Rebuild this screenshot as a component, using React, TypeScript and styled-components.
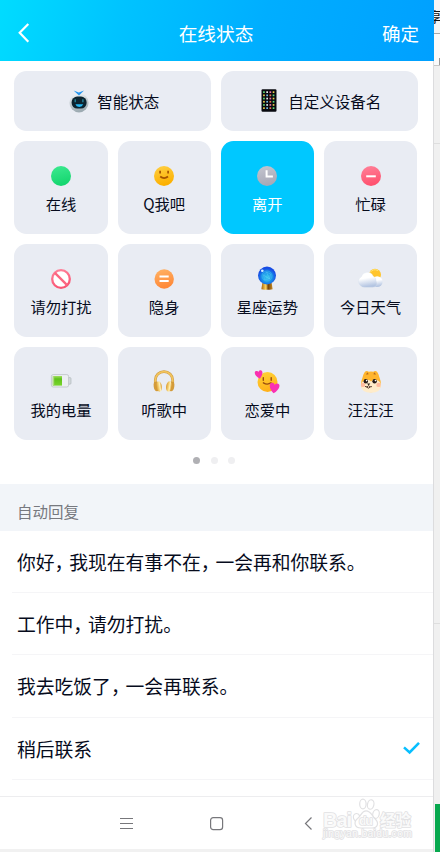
import React from "react";
import styled, { createGlobalStyle } from "styled-components";

const GlobalStyle = createGlobalStyle`
  * { box-sizing: border-box; }
  body {
    margin: 0;
    background: #f0f0f0;
    color: #060b1c;
    font-family: "Noto Sans CJK SC", sans-serif;
  }
  svg { display: block; overflow: visible; }
`;

const Screen = styled.div`
  display: flex;
  width: 440px;
  height: 852px;
  overflow: hidden;
`;

const Phone = styled.main`
  position: relative;
  z-index: 1;
  display: flex;
  flex-direction: column;
  width: 434px;
  height: 852px;
  flex: none;
  background: #fff;
  border-right: 1px solid #dcdcde;
`;

const Header = styled.header`
  display: grid;
  grid-template-columns: 80px 1fr 85px;
  align-items: center;
  height: 61px;
  flex: none;
  margin-right: -1px;
  padding: 5px 15px 0 18px;
  color: #fff;
  background: linear-gradient(105deg, #00dcff 0%, #00c3ff 28%, #00aeff 60%, #00a0ff 100%);
`;

const Title = styled.h1`
  margin: 0;
  font-size: 18.7px;
  line-height: 26px;
  font-weight: 400;
  text-align: center;
  white-space: nowrap;
`;

const Confirm = styled.div`
  font-size: 18.5px;
  line-height: 26px;
  text-align: right;
`;

const StatusPanel = styled.section`
  height: 423px;
  flex: none;
  padding: 10px 15px 0 14.4px;
`;

const WideRow = styled.div`
  display: grid;
  grid-template-columns: 196.5px 197px;
  gap: 10.3px;
  margin-bottom: 10.2px;
`;

const WideTile = styled.div<{ $gap: number }>`
  display: flex;
  align-items: center;
  justify-content: center;
  gap: ${(p) => p.$gap}px;
  height: 60px;
  padding-left: 3px;
  border-radius: 12.5px;
  background: #e9ecf3;
  font-size: 15.5px;
`;

const TileGrid = styled.div`
  display: grid;
  grid-template-columns: repeat(4, 93.2px);
  gap: 9.8px 10px;
`;

const Tile = styled.div<{ $active?: boolean }>`
  display: flex;
  flex-direction: column;
  align-items: center;
  height: 93.2px;
  padding-top: 21.6px;
  border-radius: 12.5px;
  color: ${(p) => (p.$active ? "#fff" : "inherit")};
  background: ${(p) => (p.$active ? "#00c8ff" : "#e9ecf3")};
`;

const TileIcon = styled.div`
  display: grid;
  place-items: center;
  width: 28px;
  height: 26px;
`;

const TileLabel = styled.div`
  margin-top: 2px;
  font-size: 15.3px;
  line-height: 24px;
  white-space: nowrap;
`;

const Dots = styled.div`
  display: flex;
  justify-content: center;
  gap: 10.3px;
  margin-top: 16.5px;
  padding-right: 4px;
`;

const Dot = styled.i<{ $on?: boolean }>`
  width: 7px;
  height: 7px;
  border-radius: 50%;
  background: ${(p) => (p.$on ? "#b0b0b4" : "#efeff1")};
`;

const SectionTitle = styled.h2`
  height: 47px;
  flex: none;
  margin: 0;
  padding: 9px 17px 0;
  font-size: 15.5px;
  line-height: 37px;
  font-weight: 400;
  color: #77797f;
  background: #f2f5f9;
`;

const Replies = styled.div`
  height: 266px;
  flex: none;
  padding-left: 12px;
  border-bottom: 1px solid #ededef;
`;

const Reply = styled.div`
  display: flex;
  align-items: center;
  justify-content: space-between;
  height: 62.2px;
  padding: 0 13px 0 5px;
  border-bottom: 1px solid #f5f5f7;
  font-size: 18.8px;
  white-space: nowrap;
`;

const Comma = styled.span`
  margin-right: 5.3px;
  font-feature-settings: "halt";
`;

const NavBar = styled.nav`
  display: flex;
  align-items: center;
  height: 52px;
  flex: none;
  gap: 77px;
  padding-left: 120px;
`;

const BackSlot = styled.div`
  padding-left: 5px;
`;

const PageFoot = styled.div`
  flex: 1;
  background: #f1f1f1;
`;

const Backdrop = styled.aside`
  display: flex;
  flex-direction: column;
  width: 6px;
  overflow: hidden;
  background: #f0f0f0;
`;

const BackTab = styled.div`
  height: 34px;
  flex: none;
  padding-top: 6px;
  background: #f5f5f5;
  border-bottom: 1px solid #a9a9a9;
  font-size: 14px;
  line-height: 20px;
  color: #111;
  text-indent: -6px;
  white-space: nowrap;
  overflow: hidden;
`;

const BackBar = styled.div`
  display: flex;
  align-items: flex-end;
  justify-content: flex-end;
  height: 32px;
  flex: none;
  background: #fafafa;
  border-bottom: 1px solid #c8c8c8;
`;

const BackHandle = styled.div`
  width: 1px;
  height: 7px;
  background: #999;
`;

const BackBlock = styled.div<{ $height: number; $line?: boolean }>`
  height: ${(p) => p.$height}px;
  flex: none;
  border-bottom: 1px solid ${(p) => (p.$line ? "#dedede" : "transparent")};
`;

const GreenBlock = styled.div`
  flex: 1;
  margin-left: 1px;
  background: #07a84e;
`;

const Watermark = styled.div`
  position: absolute;
  z-index: 2;
  left: 322px;
  top: 796px;
  width: 92px;
  height: 48px;
  text {
    font-family: "Liberation Sans", "Noto Sans CJK SC", sans-serif;
    fill: #fafafa;
    stroke: #e1e1e3;
    stroke-width: 1.6px;
    stroke-linejoin: round;
    paint-order: stroke;
  }
`;

const Grad = ({ id, a, b }: { id: string; a: string; b: string }) => (
  <defs>
    <linearGradient id={id} x1="0" y1="0" x2="0.25" y2="1">
      <stop offset="0" stopColor={a} />
      <stop offset="1" stopColor={b} />
    </linearGradient>
  </defs>
);

const Online = () => (
  <svg width="20" height="20"><Grad id="on" a="#3dea91" b="#15d66f" /><circle cx="10" cy="10" r="10" fill="url(#on)" /></svg>
);
const Smile = () => (
  <svg width="20" height="20">
    <Grad id="smile" a="#ffd044" b="#fcb000" />
    <circle cx="10" cy="10" r="10" fill="url(#smile)" />
    <path d="M6.1 4.7v2.8M14.1 4.7v2.8M6.2 10.5q3.9 3.1 7.8 0" fill="none" stroke="#a55300" strokeWidth="1.7" />
  </svg>
);
const Clock = () => (
  <svg width="20" height="20">
    <Grad id="clock" a="#c5c6d0" b="#a8a9b7" />
    <circle cx="10" cy="10" r="10" fill="url(#clock)" />
    <path d="M9.6 4.2v6.4h6.3" fill="none" stroke="#fff" strokeWidth="2" />
  </svg>
);
const Busy = () => (
  <svg width="20" height="20">
    <Grad id="busy" a="#ff829a" b="#ff526f" />
    <circle cx="10" cy="10" r="10" fill="url(#busy)" />
    <path d="M5.2 10.3h9.6" stroke="#fff" strokeWidth="2" />
  </svg>
);
const Forbidden = () => (
  <svg width="20" height="20">
    <Grad id="forbid" a="#ff829a" b="#f95675" />
    <circle cx="10" cy="10" r="8.8" fill="#fff" stroke="url(#forbid)" strokeWidth="2.3" />
    <path d="M3.9 3.9l12.2 12.2" stroke="#fb6681" strokeWidth="2.3" />
  </svg>
);
const Hidden = () => (
  <svg width="20" height="20">
    <Grad id="hide" a="#ffb365" b="#ff8938" />
    <circle cx="10.2" cy="10" r="9.7" fill="url(#hide)" />
    <path d="M5.5 7.6h9.2M5.5 12h9.2" stroke="#fff" strokeWidth="2" />
  </svg>
);
const Crystal = () => (
  <svg width="20" height="25">
    <defs>
      <radialGradient id="ball" cx="0.5" cy="0.6">
        <stop offset="0" stopColor="#38c6ee" />
        <stop offset="0.6" stopColor="#168ee9" />
        <stop offset="1" stopColor="#174ce4" />
      </radialGradient>
      <linearGradient id="stand">
        <stop offset="0" stopColor="#a46509" />
        <stop offset="0.4" stopColor="#ffd45d" />
        <stop offset="0.6" stopColor="#70420a" />
        <stop offset="1" stopColor="#cc8c22" />
      </linearGradient>
    </defs>
    <path d="M5.3 17h9.4l.9 6.2q-5.6 1.2-11.2 0z" fill="url(#stand)" />
    <circle cx="10" cy="9.5" r="9" fill="url(#ball)" />
    <circle cx="10" cy="10" r="5" fill="none" stroke="#65e3f4" strokeWidth="0.5" opacity="0.6" />
    <path d="M6.5 9l3-3 4 2-1 5-5 .5zM9.5 6l3 7M6.5 9l6 4" fill="none" stroke="#91efff" strokeWidth="0.4" opacity="0.6" />
    <circle cx="5.3" cy="4.8" r="1.3" fill="#d4f2ff" />
  </svg>
);
const Weather = () => (
  <svg width="25" height="21">
    <defs>
      <linearGradient id="cloud" x1="0" y1="0" x2="0.2" y2="1">
        <stop offset="0.45" stopColor="#fff" />
        <stop offset="1" stopColor="#b4c5e2" />
      </linearGradient>
    </defs>
    <circle cx="17" cy="6.8" r="6" fill="#ffc52c" />
    <path d="M12 4.5a6.5 6.5 0 0 1 8-2" stroke="#ffe67a" fill="none" />
    <circle cx="19.2" cy="13.6" r="5.4" fill="url(#cloud)" />
    <path d="M7 19.3a6.2 6.2 0 0 1-6.5-5.6 5.4 5.4 0 0 1 2.8-5 6.3 6.3 0 0 1 11.8-.8 5.3 5.3 0 0 1 3 5.2c1.8 3.2 0 6.2-3.4 6.2z" fill="url(#cloud)" stroke="#d3ddec" strokeWidth="0.3" />
  </svg>
);
const Battery = () => (
  <svg width="20" height="15">
    <defs>
      <linearGradient id="green" x1="0" y1="0" x2="0" y2="1">
        <stop offset="0" stopColor="#a2df60" />
        <stop offset="0.3" stopColor="#5fc31a" />
        <stop offset="1" stopColor="#78d52b" />
      </linearGradient>
    </defs>
    <rect x="17" y="3.6" width="3" height="6.6" rx="1" fill="#d5dadd" stroke="#aab1b5" strokeWidth="0.6" />
    <rect x="0.4" y="0.6" width="17.2" height="12.4" rx="1.8" fill="#eceff1" stroke="#bbc1c4" strokeWidth="0.8" />
    <path d="M1.8 2h9.2v9.6H1.8z" fill="url(#green)" />
    <path d="M1.8 2h1.4v9.6H1.8z" fill="#acd77d" />
  </svg>
);
const Headphones = () => (
  <svg width="22" height="24">
    <defs>
      <linearGradient id="gold">
        <stop offset="0" stopColor="#d9982c" />
        <stop offset="0.45" stopColor="#f7d67c" />
        <stop offset="0.65" stopColor="#fff0b8" />
        <stop offset="1" stopColor="#d99a2e" />
      </linearGradient>
    </defs>
    <path d="M2.3 15V10a8.7 8.4 0 0 1 17.4 0v5" fill="none" stroke="#cc9a43" strokeWidth="2.7" />
    <path d="M2.3 12V10a8.7 8.4 0 0 1 17.4 0v2" fill="none" stroke="#f3c55e" strokeWidth="1.7" />
    <ellipse cx="3.6" cy="16.3" rx="2.9" ry="4.9" fill="#d39b3a" transform="rotate(-8 3.6 16.3)" />
    <ellipse cx="6.1" cy="16.5" rx="2.8" ry="5.2" fill="url(#gold)" transform="rotate(-10 6.1 16.5)" />
    <ellipse cx="18.4" cy="16.3" rx="2.9" ry="4.9" fill="#d39b3a" transform="rotate(8 18.4 16.3)" />
    <ellipse cx="15.9" cy="16.5" rx="2.8" ry="5.2" fill="url(#gold)" transform="rotate(10 15.9 16.5)" />
  </svg>
);
const heart = "M0 3.6C-4 .5-4.2-3.5-1.8-3.5-.7-3.5 0-2.6 0-2 0-2.6.7-3.5 1.8-3.5 4.2-3.5 4 .5 0 3.6Z";
const Love = () => (
  <svg width="24" height="24">
    <Grad id="love" a="#ffd336" b="#ffb11a" />
    <circle cx="12.5" cy="12" r="10" fill="url(#love)" />
    <path d="M8.3 7.6v2.6M16.2 7.6v2.6M8.4 12.8q4 2.6 7.6 0" fill="none" stroke="#994c10" strokeWidth="1.4" strokeLinecap="round" />
    <path d={heart} fill="#f930b0" transform="translate(4 4.6) rotate(-12) scale(1.15)" />
    <path d={heart} fill="#fa31b3" transform="translate(19.3 18.2) rotate(8) scale(1.45)" />
  </svg>
);
const Dog = () => (
  <svg width="22" height="24">
    <path d="M2.6 7.2C4 1 6.6-.2 8.7 1.8q2.3-.7 4.6 0C15.4-.2 18 1 19.4 7.2q3.6 8.7-1 12.5-7.4 5-14.8 0-4.6-3.8-1-12.5z" fill="#ffb52d" />
    <path d="M6.2 4.7q.5-2 1.6-2.1l.8 1.7zM15.8 4.7q-.5-2-1.6-2.1l-.8 1.7z" fill="#b56a1d" />
    <path d="M1 15.2q.8-5.3 6-5.5 2.7-.2 4 1.8 1.3-2 4-1.8 5.2.2 6 5.5 0 7.3-10 7.5-10-.2-10-7.5z" fill="#ffecca" />
    <circle cx="3" cy="14.9" r="2.2" fill="#ffa78c" opacity="0.7" />
    <circle cx="18.5" cy="14.9" r="2.2" fill="#ffa78c" opacity="0.7" />
    <circle cx="5.8" cy="11.2" r="2.2" fill="#241a18" /><circle cx="14.6" cy="11.2" r="2.2" fill="#241a18" />
    <circle cx="6.6" cy="10.6" r="0.8" fill="#fff" /><circle cx="15.4" cy="10.6" r="0.8" fill="#fff" />
    <path d="M7 13.6h3.3l-1.6 1.8z" fill="#271b18" />
    <path d="M5 16.4q2 1.6 3.7-.8 1 2 3.2 1M6.5 17q2 2.2 3.6.2" fill="none" stroke="#47291e" strokeWidth="0.9" />
  </svg>
);
const Robot = () => (
  <svg width="20" height="23">
    <Grad id="robot" a="#f5f8fa" b="#9dabb2" />
    <circle cx="10" cy="12.8" r="9.6" fill="url(#robot)" />
    <rect x="2.6" y="6.6" width="15" height="12" rx="5.6" fill="#0c2430" />
    <path d="M4.6.6l5.2 1.8L15 .6 10 5.4z" fill="#2596ef" />
    <path d="M6.2 9.2v3M13.9 9.2v3" stroke="#2c92aa" strokeWidth="1.2" />
    <path d="M6.4 14.3h7.8q-.8 2.6-3.9 2.6t-3.9-2.6z" fill="#25b9f5" />
  </svg>
);
const appColors = ["#5edb79", "#ed7850", "#75bde8", "#edce4b", "#e671b1", "#eee"];
const PhoneIcon = () => (
  <svg width="16" height="24">
    <rect x="0.5" y="0.3" width="15" height="22.4" rx="1.2" fill="#090a10" />
    {Array.from({ length: 24 }, (_, i) => (
      <rect key={i} x={2.1 + (i % 4) * 3.2} y={2.3 + Math.floor(i / 4) * 3.2} width="1.7" height="1.7" fill={appColors[(i * 5 + Math.floor(i / 4)) % 6]} />
    ))}
  </svg>
);
const Paw = () => (
  <g fill="#fff" stroke="#e1e1e3" strokeWidth="1.2">
    <ellipse cx="34.8" cy="21.6" rx="3.3" ry="4.1" transform="rotate(-18 34.8 21.6)" />
    <ellipse cx="40.9" cy="8" rx="3.2" ry="4.8" />
    <ellipse cx="48.7" cy="8.5" rx="3.2" ry="4.8" transform="rotate(12 48.7 8.5)" />
    <ellipse cx="54" cy="18" rx="3.2" ry="4.5" transform="rotate(14 54 18)" />
    <path d="M44 14.8c5 0 5.5 4.7 9 8 4.5 4.3 2.6 9.2-3 9.2H39c-6.4 0-7.8-6-3.4-9.5 3.8-3.2 4.2-7.7 8.4-7.7z" />
  </g>
);

const statuses = [
  { label: "在线", Icon: Online },
  { label: "Q我吧", Icon: Smile },
  { label: "离开", Icon: Clock, active: true },
  { label: "忙碌", Icon: Busy },
  { label: "请勿打扰", Icon: Forbidden },
  { label: "隐身", Icon: Hidden },
  { label: "星座运势", Icon: Crystal },
  { label: "今日天气", Icon: Weather },
  { label: "我的电量", Icon: Battery },
  { label: "听歌中", Icon: Headphones },
  { label: "恋爱中", Icon: Love },
  { label: "汪汪汪", Icon: Dog },
];

const replies = [
  "你好，我现在有事不在，一会再和你联系。",
  "工作中，请勿打扰。",
  "我去吃饭了，一会再联系。",
  "稍后联系",
];
const selectedReply = 3;

const ReplyText = ({ text }: { text: string }) => (
  <span>
    {text.split("，").map((part, i) => (
      <React.Fragment key={i}>
        {i > 0 && <Comma>，</Comma>}
        {part}
      </React.Fragment>
    ))}
  </span>
);

export default function App() {
  return (
    <Screen>
      <GlobalStyle />
      <Phone>
        <Header>
          <svg width="12" height="20"><path d="M10.3 1L1.7 9.8l8.6 8.9" fill="none" stroke="#fff" strokeWidth="2.2" /></svg>
          <Title>在线状态</Title>
          <Confirm>确定</Confirm>
        </Header>
        <StatusPanel>
          <WideRow>
            <WideTile $gap={8}><Robot />智能状态</WideTile>
            <WideTile $gap={11}><PhoneIcon />自定义设备名</WideTile>
          </WideRow>
          <TileGrid>
            {statuses.map(({ label, Icon, active }) => (
              <Tile key={label} $active={active}>
                <TileIcon><Icon /></TileIcon>
                <TileLabel>{label}</TileLabel>
              </Tile>
            ))}
          </TileGrid>
          <Dots><Dot $on /><Dot /><Dot /></Dots>
        </StatusPanel>
        <SectionTitle>自动回复</SectionTitle>
        <Replies>
          {replies.map((text, i) => (
            <Reply key={text}>
              <ReplyText text={text} />
              {i === selectedReply && (
                <svg width="17" height="14"><path d="M1 6.4l5.6 5L16 1.8" fill="none" stroke="#08bfff" strokeWidth="2.6" /></svg>
              )}
            </Reply>
          ))}
        </Replies>
        <NavBar>
          <svg width="13" height="13"><path d="M0 1.5h13M0 6.5h13M0 11.5h13" stroke="#77777b" strokeWidth="1" /></svg>
          <svg width="13" height="13"><rect x="0.6" y="0.6" width="12" height="12" rx="2.6" fill="none" stroke="#77777b" strokeWidth="1.2" /></svg>
          <BackSlot>
            <svg width="7" height="13"><path d="M6.5.5l-6 6 6 6" fill="none" stroke="#77777b" strokeWidth="1.2" /></svg>
          </BackSlot>
        </NavBar>
        <PageFoot />
        <Watermark>
          <svg width="92" height="48">
            <Paw />
            <text x="1" y="30.5" fontSize="20" fontWeight="700" textLength="29">Bai</text>
            <text x="37" y="28.5" fontSize="12.5" fontWeight="700" textLength="14">du</text>
            <text x="58" y="29.5" fontSize="15.5" fontWeight="700">经验</text>
            <text x="1" y="41" fontSize="10.5" textLength="89">jingyan.baidu.com</text>
          </svg>
        </Watermark>
      </Phone>
      <Backdrop>
        <BackTab>享</BackTab>
        <BackBar><BackHandle /></BackBar>
        <BackBlock $height={78} $line />
        <BackBlock $height={480} $line />
        <BackBlock $height={180} />
        <GreenBlock />
      </Backdrop>
    </Screen>
  );
}
